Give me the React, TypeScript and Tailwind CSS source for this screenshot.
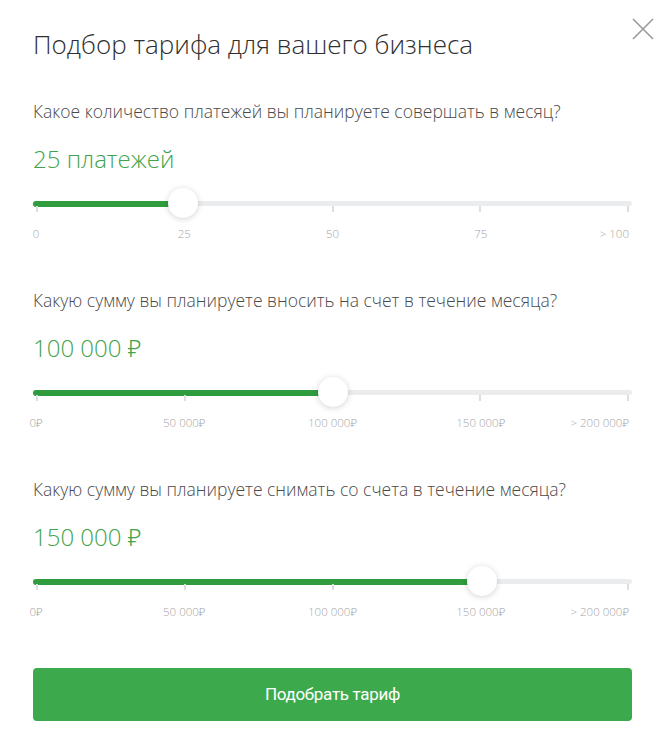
import React from "react";

type SliderProps = {
  percent: number;
  labels: string[];
};

function Slider({ percent, labels }: SliderProps) {
  return (
    <div className="flex flex-col">
      <div className="relative pt-[13px] h-[30px]">
        <div className="flex h-[5px] rounded-full bg-[#eaeced] items-center">
          <div
            className="h-[6px] rounded-full bg-[#2f9d3d]"
            style={{ width: `${percent}%` }}
          />
        </div>
        <div className="flex justify-between px-[3px]">
          {labels.map((_, i) => (
            <div key={i} className="w-[2px] h-[6px] bg-[#dcdedf]" />
          ))}
        </div>
        <div
          className="absolute top-0 w-[30px] h-[30px] -ml-[15px] rounded-full bg-white shadow-[0_1px_6px_rgba(0,0,0,0.18)]"
          style={{ left: `${percent}%` }}
        />
      </div>
      <div className="mt-[8px] flex justify-between px-[3px] text-[11.5px] leading-[16px] text-[#a5a5a5] font-light">
        {labels.map((l, i) => (
          <div
            key={i}
            className={
              i === labels.length - 1
                ? "w-0 flex justify-end whitespace-nowrap"
                : "w-0 flex justify-center whitespace-nowrap"
            }
          >
            {l}
          </div>
        ))}
      </div>
    </div>
  );
}

type SectionProps = {
  question: string;
  value: string;
  percent: number;
  labels: string[];
  className: string;
};

function Section({ question, value, percent, labels, className }: SectionProps) {
  return (
    <section className={className}>
      <p className="text-[17.5px] leading-[24px] font-light text-[#4a4a4a]">{question}</p>
      <div className="mt-[21px] text-[24px] leading-[30px] font-light text-[#41a34b]">{value}</div>
      <div className="mt-[14px]">
        <Slider percent={percent} labels={labels} />
      </div>
    </section>
  );
}

export default function App() {
  const rub = ["0₽", "50 000₽", "100 000₽", "150 000₽", "> 200 000₽"];
  return (
    <div
      className="w-[662px] h-[733px] bg-white pl-[33px] pr-[30px] pt-[28px] text-[#333] flex flex-col"
      style={{ fontFamily: '"Open Sans", "Noto Sans", sans-serif' }}
    >
      <header className="flex justify-between items-start">
        <h1 className="text-[26px] leading-[32px] font-light text-[#2f2f2f]">
          Подбор тарифа для вашего бизнеса
        </h1>
        <button className="-mt-[10px] -mr-[22px] w-[22px] h-[22px]">
          <svg viewBox="0 0 22 22" width="22" height="22" fill="none" stroke="#9a9a9a" strokeWidth="1.6">
            <path d="M1 1 L21 21 M21 1 L1 21" />
          </svg>
        </button>
      </header>

      <Section
        className="mt-[39px]"
        question="Какое количество платежей вы планируете совершать в месяц?"
        value="25 платежей"
        percent={25}
        labels={["0", "25", "50", "75", "> 100"]}
      />
      <Section
        className="mt-[46px]"
        question="Какую сумму вы планируете вносить на счет в течение месяца?"
        value="100 000 ₽"
        percent={50}
        labels={rub}
      />
      <Section
        className="mt-[46px]"
        question="Какую сумму вы планируете снимать со счета в течение месяца?"
        value="150 000 ₽"
        percent={75}
        labels={rub}
      />

      <button
        className="mt-[48px] w-full h-[53px] rounded-[4px] bg-[#3caa4c] text-white text-[17px] tracking-[-0.3px]"
        style={{ fontFamily: 'Roboto, "Liberation Sans", sans-serif' }}
      >
        Подобрать тариф
      </button>
    </div>
  );
}
